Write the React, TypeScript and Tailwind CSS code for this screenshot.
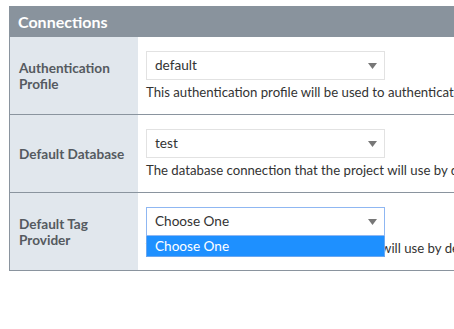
import React from "react";

const font = { fontFamily: '"Source Sans Pro", Lato, "Noto Sans", sans-serif' };

function Arrow() {
  return (
    <svg width="9" height="6" viewBox="0 0 9 6" className="absolute right-[7px] top-1/2 -translate-y-1/2">
      <path d="M0 0 L9 0 L4.5 6 Z" fill="#777777" />
    </svg>
  );
}

function Row({
  label,
  value,
  help,
  open,
}: {
  label: React.ReactNode;
  value: string;
  help: string;
  open?: boolean;
}) {
  return (
    <div className="flex h-[78px] border-b border-[#8a949e]">
      <div className="w-[128px] shrink-0 bg-[#e1e7ed] flex items-center pl-[9px] pr-2 text-[13.6px] leading-[16px] font-bold text-[#555a60]">
        {label}
      </div>
      <div className="flex-1 pl-[8px] pt-[14px]">
        <div className="relative w-[239px]">
          <div
            className={`relative h-[29px] border ${open ? "border-[#8fb7f2]" : "border-[#e2e2e2]"} bg-white flex items-center pl-[8px] text-[13.6px] text-[#333]`}
          >
            {value}
            <Arrow />
          </div>
          {open && (
            <div className="absolute left-0 top-full w-full h-[21px] bg-[#1e90ff] text-white text-[13.6px] leading-[21px] pl-[8px] z-10 border-x border-b border-[#6aa7f0]">
              Choose One
            </div>
          )}
        </div>
        <div className="mt-[3px] text-[13.2px] leading-[18px] text-[#333] whitespace-nowrap">{help}</div>
      </div>
    </div>
  );
}

export default function App() {
  return (
    <div className="w-[454px] h-[329px] overflow-hidden bg-white" style={font}>
      <div className="ml-[9px] mt-[6px] w-[560px]">
        <div className="h-[31px] bg-[#89939d] text-white font-bold text-[16px] flex items-center pl-[9px]">
          Connections
        </div>
        <div className="border-l border-[#8a949e]">
          <Row
            label={<span>Authentication<br />Profile</span>}
            value="default"
            help="This authentication profile will be used to authenticate users"
          />
          <Row
            label="Default Database"
            value="test"
            help="The database connection that the project will use by default"
          />
          <Row
            label={<span>Default Tag<br />Provider</span>}
            value="Choose One"
            help="The default tag provider that the project will use by default"
            open
          />
        </div>
      </div>
    </div>
  );
}
